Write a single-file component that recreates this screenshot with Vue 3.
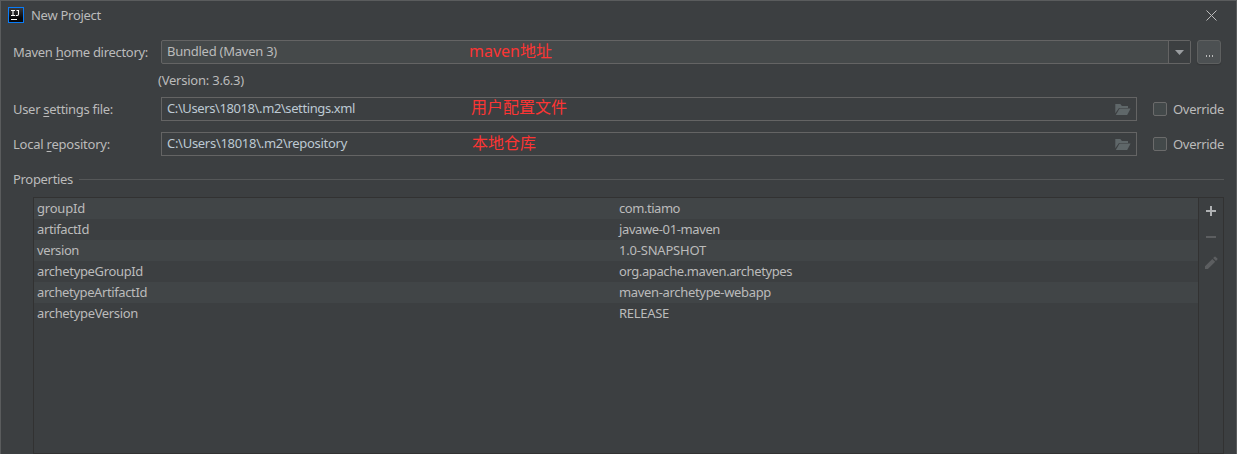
<script setup>
const properties = [
  { name: 'groupId', nameWidth: 48, value: 'com.tiamo', valueWidth: 61 },
  { name: 'artifactId', nameWidth: 52, value: 'javawe-01-maven', valueWidth: 101 },
  { name: 'version', nameWidth: 42, value: '1.0-SNAPSHOT', valueWidth: 87 },
  { name: 'archetypeGroupId', nameWidth: 106, value: 'org.apache.maven.archetypes', valueWidth: 173 },
  { name: 'archetypeArtifactId', nameWidth: 110, value: 'maven-archetype-webapp', valueWidth: 152 },
  { name: 'archetypeVersion', nameWidth: 101, value: 'RELEASE', valueWidth: 50 },
]

const files = [
  { before: 'User ', key: 's', after: 'ettings file:', width: 100, path: 'C:\\Users\\18018\\.m2\\settings.xml', pathWidth: 188, note: '用户配置文件', kind: 'settings' },
  { before: 'Local ', key: 'r', after: 'epository:', width: 97, path: 'C:\\Users\\18018\\.m2\\repository', pathWidth: 180, note: '本地仓库', kind: 'repository' },
]

// Tracks each label so that it fills the given advance width.
const vFit = {
  mounted(el, { value }) {
    const natural = el.getBoundingClientRect().width
    el.style.letterSpacing = `${(value - natural) / el.textContent.length}px`
  },
}
</script>

<template>
  <div class="dialog">
    <header class="titlebar">
      <svg class="logo" width="16" height="16" viewBox="0 0 16 16">
        <defs>
          <linearGradient id="logoFill" x1="0" y1="0" x2="0" y2="1">
            <stop offset="0" stop-color="#3b3b3d" />
            <stop offset="0.7" stop-color="#08080a" />
          </linearGradient>
        </defs>
        <rect x="0.5" y="0.5" width="15" height="15" fill="url(#logoFill)" stroke="#087cfa" />
        <path d="M3 3.5h4M5 3.5v5M3 8.5h4M8.5 3.5h2v3.8q0 1.2-1.2 1.2H7.8" fill="none" stroke="#fff" stroke-width="1.1" />
        <path d="M3 12.5h6" stroke="#fff" />
      </svg>
      <span class="title"><span v-fit="70">New Project</span></span>
      <svg class="close" width="11" height="11" viewBox="0 0 11 11">
        <path d="M0.5 0.5l10 10M10.5 0.5l-10 10" fill="none" stroke="#bbb" stroke-width="1" />
      </svg>
    </header>

    <div class="row home">
      <label class="label"><span v-fit="135">Maven <u>h</u>ome directory:</span></label>
      <div class="combo">
        <span class="combo-text"><span v-fit="110">Bundled (Maven 3)</span></span>
        <span class="arrow"><svg width="9" height="5" viewBox="0 0 9 5"><path d="M0 0h9L4.5 5z" fill="#9a9da0" /></svg></span>
        <span class="note note-home">maven地址</span>
      </div>
      <div class="more"><i></i><i></i><i></i></div>
    </div>

    <div class="version"><span v-fit="86">(Version: 3.6.3)</span></div>

    <div v-for="f in files" :key="f.kind" class="row file">
      <label class="label"><span v-fit="f.width">{{ f.before }}<u>{{ f.key }}</u>{{ f.after }}</span></label>
      <div class="field">
        <span class="path"><span v-fit="f.pathWidth">{{ f.path }}</span></span>
        <svg class="folder" width="16" height="12" viewBox="0 0 16 12">
          <path d="M0.3 10.3V1h5l1.6 2H13V5H4z" fill="#5f6769" />
          <path d="M4.6 5.6H15.6L12.2 12H0.8z" fill="#5f6769" />
        </svg>
        <span class="note" :class="'note-' + f.kind">{{ f.note }}</span>
      </div>
      <span class="checkbox"></span>
      <span class="override"><span v-fit="51">Override</span></span>
    </div>

    <div class="section">
      <span class="section-name"><span v-fit="60">Properties</span></span>
      <span class="rule"></span>
    </div>

    <div class="panel">
      <div class="table">
        <div v-for="p in properties" :key="p.name" class="tr">
          <span class="td name"><span v-fit="p.nameWidth">{{ p.name }}</span></span>
          <span class="td"><span v-fit="p.valueWidth">{{ p.value }}</span></span>
        </div>
      </div>
      <div class="tools">
        <svg width="16" height="16" viewBox="0 0 16 16"><path d="M3 8h10M8 3v10" stroke="#afb1b3" stroke-width="2" /></svg>
        <svg width="16" height="16" viewBox="0 0 16 16"><path d="M3 8h10" stroke="#5c5e60" stroke-width="2" /></svg>
        <svg width="16" height="16" viewBox="0 0 16 16">
          <path d="M2 11.2L9.3 3.9l2.9 2.9L4.9 14H2zM10.1 3.1l1.4-1.4q.5-.4 1 0l1.9 1.9q.4.5 0 1L13 6z" fill="#5c5e60" />
        </svg>
      </div>
    </div>
  </div>
</template>

<style>
body {
  margin: 0;
  background: #3c3f41;
}
</style>

<style scoped>
.dialog {
  box-sizing: border-box;
  width: 1237px;
  height: 454px;
  overflow: hidden;
  display: flex;
  flex-direction: column;
  background: #3c3f41;
  border: 1px solid #5a5c5d;
  border-bottom: 0;
  color: #bbb;
  font: 13px/20px "Noto Sans", "Noto Sans CJK SC", sans-serif;
  white-space: pre;
}
.titlebar {
  display: flex;
  align-items: center;
  flex: none;
  height: 28px;
  padding: 0 19px 0 7px;
}
.title {
  flex: 1;
  margin-left: 7px;
  line-height: 18px;
}
.row {
  display: flex;
  flex: none;
  height: 24px;
}
.home {
  margin-top: 11px;
}
.label {
  width: 148px;
  padding-left: 12px;
  box-sizing: border-box;
  line-height: 25px;
}
u {
  text-decoration-thickness: 1px;
  text-underline-offset: 2px;
  text-decoration-skip-ink: none;
}
.combo,
.field {
  position: relative;
  box-sizing: border-box;
  display: flex;
  margin-left: 12px;
  border: 1px solid #646464;
  line-height: 21px;
}
.combo {
  width: 1030px;
  border-radius: 2px;
  background: #45494a;
}
.field {
  width: 976px;
}
.combo-text,
.path {
  flex: 1;
  padding-left: 5px;
}
.path {
  color: #bdc9d3;
}
.arrow {
  display: flex;
  align-items: center;
  justify-content: center;
  width: 21px;
  border-left: 1px solid #646464;
  background: #3c3f41;
}
.more {
  box-sizing: border-box;
  display: flex;
  justify-content: center;
  gap: 2px;
  width: 24px;
  height: 24px;
  margin-left: 6px;
  padding-top: 14px;
  border: 1px solid #5e6060;
  border-radius: 3px;
  background: #4c5052;
  box-shadow: 0 1px 1px #343638;
}
.more i {
  width: 1px;
  height: 2px;
  background: #bbb;
}
.version {
  flex: none;
  height: 20px;
  margin: 6px 0 7px 157px;
}
.file + .file {
  margin-top: 11px;
}
.folder {
  margin: 5px 5px 0 0;
}
.checkbox {
  box-sizing: border-box;
  width: 14px;
  height: 14px;
  margin: 5px 6px 0 16px;
  border: 1px solid #6b6b6b;
  border-radius: 2px;
  background: #43494a;
}
.override {
  line-height: 25px;
}
.note {
  position: absolute;
  top: -1px;
  color: #fb3534;
  font: 16px/21px "Noto Sans", "Noto Sans CJK SC", sans-serif;
}
.note-home {
  top: 0;
  left: 307px;
}
.note-settings {
  left: 309px;
}
.note-repository {
  top: 0;
  left: 310px;
}
.section {
  display: flex;
  align-items: center;
  flex: none;
  height: 20px;
  margin-top: 13px;
  padding: 0 12px;
}
.rule {
  flex: 1;
  height: 1px;
  margin-left: 6px;
  background: #555758;
}
.panel {
  box-sizing: border-box;
  display: flex;
  flex: none;
  width: 1191px;
  height: 257px;
  margin: 8px 0 0 32px;
  border: 1px solid #323232;
}
.table {
  flex: 1;
  border-right: 1px solid #323232;
}
.tr {
  display: flex;
  height: 21px;
  line-height: 20px;
}
.tr:nth-child(odd) {
  background: #414547;
}
.name {
  width: 582px;
}
.td {
  padding-left: 3px;
  box-sizing: border-box;
}
.tools {
  display: flex;
  flex-direction: column;
  align-items: center;
  gap: 10px;
  width: 24px;
  padding-top: 5px;
}
</style>
